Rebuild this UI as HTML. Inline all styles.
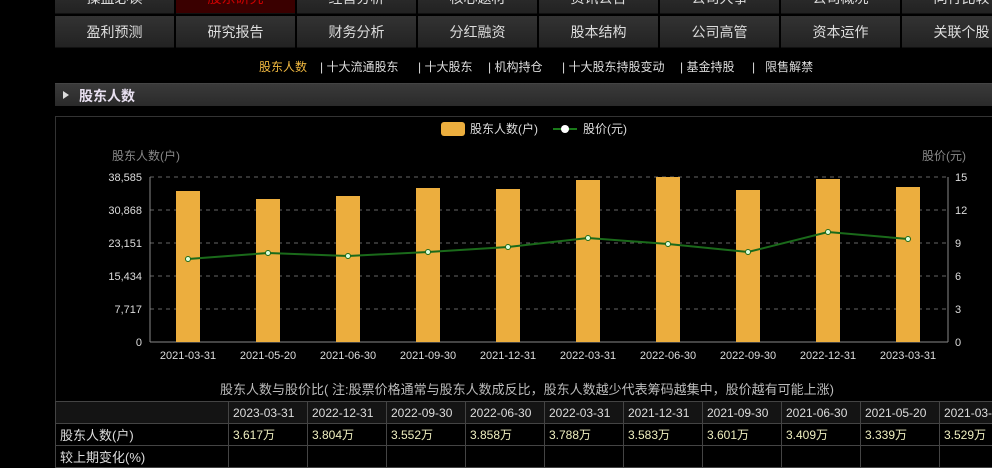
<!DOCTYPE html>
<html><head><meta charset="utf-8"><style>
*{margin:0;padding:0;box-sizing:border-box}
body{width:992px;height:452px;background:#000;overflow:hidden;position:relative;font-family:"Liberation Sans","Noto Sans CJK SC",sans-serif;color:#ddd}
.btn{position:absolute;width:119px;height:32px;background:linear-gradient(#333,#222);color:#ddd;font-size:14px;text-align:center;line-height:32px;border-bottom:1px solid #111}
.sub{position:absolute;top:58px;left:0;width:992px;font-size:12px;color:#ddd}
.sub span{position:absolute;top:0;white-space:nowrap}
.hdr{position:absolute;left:55px;top:83px;width:937px;height:23px;background:linear-gradient(#3a3a3a,#2a2a2a);border-top:1px solid #444}
.hdr b{position:absolute;left:24px;top:2px;font-size:14px;color:#e8e0f0}
.hdr i{position:absolute;left:8px;top:7px;width:0;height:0;border-left:6px solid #ddd;border-top:4px solid transparent;border-bottom:4px solid transparent}
.box{position:absolute;left:55px;top:116px;width:940px;height:290px;border:1px solid #333;border-right:none}
table{position:absolute;left:55px;top:401px;border-collapse:collapse;font-size:12px;table-layout:fixed;width:963px}
td{border:1px solid #444;height:22px;padding:0 4px;white-space:nowrap;overflow:hidden}
</style></head><body>
<div class="btn" style="left:55px;top:-18px">操盘必读</div>
<div class="btn" style="left:176px;top:-18px;background:#3a0000;color:#c00">股东研究</div>
<div class="btn" style="left:297px;top:-18px">经营分析</div>
<div class="btn" style="left:418px;top:-18px">核心题材</div>
<div class="btn" style="left:539px;top:-18px">资讯公告</div>
<div class="btn" style="left:660px;top:-18px">公司大事</div>
<div class="btn" style="left:781px;top:-18px">公司概况</div>
<div class="btn" style="left:902px;top:-18px">同行比较</div>
<div class="btn" style="left:55px;top:16px">盈利预测</div>
<div class="btn" style="left:176px;top:16px">研究报告</div>
<div class="btn" style="left:297px;top:16px">财务分析</div>
<div class="btn" style="left:418px;top:16px">分红融资</div>
<div class="btn" style="left:539px;top:16px">股本结构</div>
<div class="btn" style="left:660px;top:16px">公司高管</div>
<div class="btn" style="left:781px;top:16px">资本运作</div>
<div class="btn" style="left:902px;top:16px">关联个股</div>
<div class="sub">
<span style="left:259px;color:#f0b840">股东人数</span>
<span style="left:320px">| 十大流通股东</span>
<span style="left:418px">| 十大股东</span>
<span style="left:488px">| 机构持仓</span>
<span style="left:562px">| 十大股东持股变动</span>
<span style="left:680px">| 基金持股</span>
<span style="left:752px">|&nbsp;&nbsp; 限售解禁</span>
</div>
<div class="hdr"><i></i><b>股东人数</b></div>
<div class="box"></div>
<svg style="position:absolute;left:0;top:0" width="992" height="452" font-family="Liberation Sans,Noto Sans CJK SC,sans-serif">
<rect x="441" y="122" width="24" height="14" rx="3" fill="#ecae3e"/>
<text x="470" y="133" font-size="12" fill="#ddd">股东人数(户)</text>
<line x1="553" y1="129" x2="577" y2="129" stroke="#1a7a1a" stroke-width="2"/>
<circle cx="565" cy="129" r="4" fill="#fff"/>
<text x="583" y="133" font-size="12" fill="#ddd">股价(元)</text>
<text x="112" y="160" font-size="12" fill="#888">股东人数(户)</text>
<text x="922" y="160" font-size="12" fill="#888">股价(元)</text>
<g stroke="#666" stroke-dasharray="4,4">
<line x1="150" y1="177" x2="948" y2="177"/><line x1="150" y1="210" x2="948" y2="210"/>
<line x1="150" y1="243" x2="948" y2="243"/><line x1="150" y1="276" x2="948" y2="276"/>
<line x1="150" y1="309" x2="948" y2="309"/></g>
<line x1="150" y1="177" x2="150" y2="342" stroke="#888"/>
<line x1="948" y1="177" x2="948" y2="342" stroke="#888"/>
<line x1="150" y1="342" x2="948" y2="342" stroke="#888"/>
<g font-size="11" fill="#ddd" text-anchor="end">
<text x="142" y="181">38,585</text><text x="142" y="214">30,868</text><text x="142" y="247">23,151</text>
<text x="142" y="280">15,434</text><text x="142" y="313">7,717</text><text x="142" y="346">0</text></g>
<g font-size="11" fill="#ddd">
<text x="955" y="181">15</text><text x="955" y="214">12</text><text x="955" y="247">9</text>
<text x="955" y="280">6</text><text x="955" y="313">3</text><text x="955" y="346">0</text></g>
<g fill="#ecae3e">
<rect x="176" y="191" width="24" height="151"/><rect x="256" y="199" width="24" height="143"/>
<rect x="336" y="196" width="24" height="146"/><rect x="416" y="188" width="24" height="154"/>
<rect x="496" y="189" width="24" height="153"/><rect x="576" y="180" width="24" height="162"/>
<rect x="656" y="177" width="24" height="165"/><rect x="736" y="190" width="24" height="152"/>
<rect x="816" y="179" width="24" height="163"/><rect x="896" y="187" width="24" height="155"/></g>
<polyline points="188,259 268,253 348,256 428,252 508,247 588,238 668,244 748,252 828,232 908,239" fill="none" stroke="#1a6a1a" stroke-width="2"/>
<g fill="#dfd" stroke="#1a6a1a"><circle cx="188" cy="259" r="2.5"/><circle cx="268" cy="253" r="2.5"/><circle cx="348" cy="256" r="2.5"/><circle cx="428" cy="252" r="2.5"/><circle cx="508" cy="247" r="2.5"/><circle cx="588" cy="238" r="2.5"/><circle cx="668" cy="244" r="2.5"/><circle cx="748" cy="252" r="2.5"/><circle cx="828" cy="232" r="2.5"/><circle cx="908" cy="239" r="2.5"/></g>
<g font-size="11" fill="#ddd" text-anchor="middle">
<text x="188" y="359">2021-03-31</text><text x="268" y="359">2021-05-20</text><text x="348" y="359">2021-06-30</text>
<text x="428" y="359">2021-09-30</text><text x="508" y="359">2021-12-31</text><text x="588" y="359">2022-03-31</text>
<text x="668" y="359">2022-06-30</text><text x="748" y="359">2022-09-30</text><text x="828" y="359">2022-12-31</text>
<text x="908" y="359">2023-03-31</text></g>
<text x="527" y="394" font-size="13" fill="#bbb" text-anchor="middle">股东人数与股价比( 注:股票价格通常与股东人数成反比，股东人数越少代表筹码越集中，股价越有可能上涨)</text>
</svg>
<table>
<colgroup><col style="width:173px"><col style="width:79px"><col style="width:79px"><col style="width:79px"><col style="width:79px"><col style="width:79px"><col style="width:79px"><col style="width:79px"><col style="width:79px"><col style="width:79px"><col style="width:79px"></colgroup>
<tr style="background:#141414"><td></td><td>2023-03-31</td><td>2022-12-31</td><td>2022-09-30</td><td>2022-06-30</td><td>2022-03-31</td><td>2021-12-31</td><td>2021-09-30</td><td>2021-06-30</td><td>2021-05-20</td><td>2021-03-31</td></tr>
<tr style="color:#f0f0c0"><td style="font-size:13px;color:#ddd">股东人数(户)</td><td>3.617万</td><td>3.804万</td><td>3.552万</td><td>3.858万</td><td>3.788万</td><td>3.583万</td><td>3.601万</td><td>3.409万</td><td>3.339万</td><td>3.529万</td></tr>
<tr><td style="font-size:13px">较上期变化(%)</td><td></td><td></td><td></td><td></td><td></td><td></td><td></td><td></td><td></td><td></td></tr>
</table>
</body></html>
